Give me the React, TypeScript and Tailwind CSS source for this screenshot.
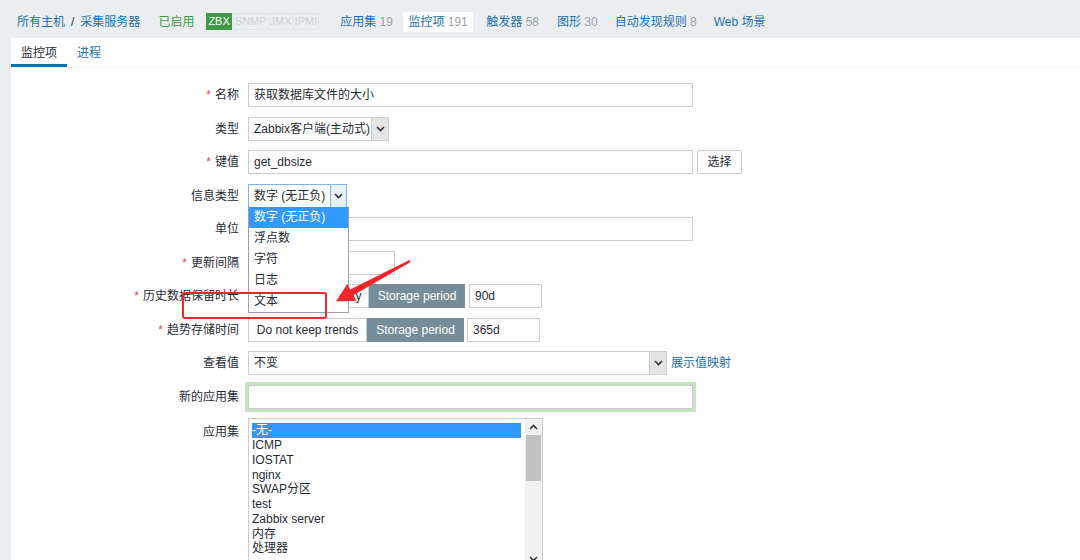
import React from 'react';

const Chevron = ({ up = false }: { up?: boolean }) => (
  <svg width="9" height="6" viewBox="0 0 9 6" className={up ? 'rotate-180' : ''}>
    <path d="M1 1 L4.5 4.5 L8 1" fill="none" stroke="#333" strokeWidth="1.6" />
  </svg>
);

const Req = () => <span className="text-[#d64e4e] mr-1">*</span>;

const Row = ({ label, req, children, top }: { label: string; req?: boolean; children?: React.ReactNode; top?: boolean }) => (
  <div className={`flex ${top ? 'items-start' : 'items-center'}`}>
    <div className={`w-[237px] pr-[9px] text-right text-[#1f2c33] shrink-0 whitespace-nowrap ${top ? 'pt-[5px]' : ''}`}>
      {req && <Req />}
      {label}
    </div>
    <div className="flex items-center">{children}</div>
  </div>
);

const appSets = ['ICMP', 'IOSTAT', 'nginx', 'SWAP分区', 'test', 'Zabbix server', '内存', '处理器'];
const infoTypes = ['数字 (无正负)', '浮点数', '字符', '日志', '文本'];

export default function App() {
  return (
    <div className="relative w-[1080px] h-[560px] overflow-hidden bg-[#ebeef0] text-[12px] font-['Liberation_Sans','Noto_Sans_CJK_SC',sans-serif]">
      {/* 顶部导航 */}
      <header className="h-[38px] flex items-center pt-[5px] pl-[17px] text-[#1e6fb0] whitespace-nowrap">
        <span>所有主机</span>
        <span className="mx-[6px] text-[#333]">/</span>
        <span>采集服务器</span>
        <span className="ml-[18px] text-[#3f9a47]">已启用</span>
        <div className="ml-[12px] flex items-center h-[17px] text-[11px]">
          <span className="h-full px-[2px] flex items-center bg-[#3f9a47] text-white">ZBX</span>
          <div className="ml-[1px] h-full flex items-center border border-[#dfe3e6] text-[#cdd3d7]">
            <span className="px-[1px]">SNMP</span>
            <span className="px-[1px] border-l border-[#dfe3e6]">JMX</span>
            <span className="px-[1px] border-l border-[#dfe3e6]">IPMI</span>
          </div>
        </div>
        <span className="ml-[21px]">应用集 <span className="text-[#9aa3a8]">19</span></span>
        <span className="ml-[10px] bg-white px-[5.5px] h-[20px] flex items-center">监控项&nbsp;<span className="text-[#9aa3a8]">191</span></span>
        <span className="ml-[13px]">触发器 <span className="text-[#9aa3a8]">58</span></span>
        <span className="ml-[18px]">图形 <span className="text-[#9aa3a8]">30</span></span>
        <span className="ml-[17px]">自动发现规则 <span className="text-[#9aa3a8]">8</span></span>
        <span className="ml-[17px]">Web 场景</span>
      </header>

      <div className="ml-[11px] bg-white h-[522px]">
        {/* 标签页 */}
        <div className="flex h-[30px] border-b border-[#f2f2f2]">
          <div className="px-[10px] pt-[4px] flex items-center border-b-[3px] border-[#0275b8] text-[#1f2c33]">监控项</div>
          <div className="px-[10px] pt-[1px] flex items-center text-[#1e6fb0]">进程</div>
        </div>

        <div className="pt-[15px] flex flex-col gap-[9.5px]">
          <Row label="名称" req>
            <div className="w-[445px] h-6 border border-[#cccccc] px-[5px] flex items-center text-[#1f2c33]">获取数据库文件的大小</div>
          </Row>
          <Row label="类型">
            <div className="h-6 flex border border-[#cccccc]">
              <div className="w-[122px] px-[5px] flex items-center text-[#1f2c33] whitespace-nowrap">Zabbix客户端(主动式)</div>
              <div className="w-[17px] border-l border-[#cccccc] bg-[#e5e5e5] flex items-center justify-center"><Chevron /></div>
            </div>
          </Row>
          <Row label="键值" req>
            <div className="w-[445px] h-6 border border-[#cccccc] px-[5px] flex items-center text-[#1f2c33]">get_dbsize</div>
            <button className="ml-[4px] w-[45px] h-6 border border-[#cccccc] rounded-[2px] bg-white text-[#1f2c33]">选择</button>
          </Row>
          <Row label="信息类型">
            <div className="relative">
              <div className="w-[99px] h-6 flex border border-[#7eb4ea]">
                <div className="flex-1 px-[5px] flex items-center text-[#1f2c33] whitespace-nowrap">数字 (无正负)</div>
                <div className="w-[18px] border-l border-[#7eb4ea] bg-[#e5f1fb] flex items-center justify-center"><Chevron /></div>
              </div>
              <div className="absolute left-0 top-[23px] z-10 w-[101px] bg-white border border-[#a0a0a0] border-t-0">
                {infoTypes.map((t, i) => (
                  <div key={t} className={`h-[21px] px-[5px] flex items-center whitespace-nowrap ${i === 0 ? 'bg-[#3399ff] text-white' : 'text-[#1f2c33]'}`}>{t}</div>
                ))}
              </div>
            </div>
          </Row>
          <Row label="单位">
            <div className="w-[445px] h-6 border border-[#cccccc]" />
          </Row>
          <Row label="更新间隔" req>
            <div className="w-[147px] h-6 border border-[#cccccc]" />
          </Row>
          <Row label="历史数据保留时长" req>
            <div className="h-6 flex">
              <div className="w-[121px] border border-[#cccccc] flex items-center px-[9px] text-[#1f2c33] whitespace-nowrap overflow-hidden">Do not keep history</div>
              <div className="w-[96px] bg-[#768d99] text-white flex items-center justify-center">Storage period</div>
              <div className="ml-[4px] w-[73px] border border-[#cccccc] px-[5px] flex items-center text-[#1f2c33]">90d</div>
            </div>
          </Row>
          <Row label="趋势存储时间" req>
            <div className="h-6 flex">
              <div className="w-[119px] border border-[#cccccc] flex items-center justify-center text-[#1f2c33] whitespace-nowrap">Do not keep trends</div>
              <div className="w-[97px] bg-[#768d99] text-white flex items-center justify-center">Storage period</div>
              <div className="ml-[3px] w-[73px] border border-[#cccccc] px-[5px] flex items-center text-[#1f2c33]">365d</div>
            </div>
          </Row>
          <Row label="查看值">
            <div className="w-[419px] h-6 flex border border-[#cccccc]">
              <div className="flex-1 px-[5px] flex items-center text-[#1f2c33]">不变</div>
              <div className="w-[17px] border-l border-[#cccccc] bg-[#e5e5e5] flex items-center justify-center"><Chevron /></div>
            </div>
            <span className="ml-[4px] text-[#1e6fb0]">展示值映射</span>
          </Row>
          <Row label="新的应用集">
            <div className="w-[445px] h-6 border border-[#cccccc] ring-[3px] ring-[#c9e2c6]" />
          </Row>
          <Row label="应用集" top>
            <div className="w-[295px] h-[150px] border border-[#cccccc] flex">
              <div className="flex-1 pl-[3px] pr-[4px] pt-[4px] text-[#1f2c33]">
                <div className="h-[15px] leading-[15px] bg-[#3399ff] text-white">-无-</div>
                {appSets.map(a => <div key={a} className="h-[14.75px] leading-[14.75px] whitespace-nowrap">{a}</div>)}
              </div>
              <div className="w-[17px] bg-[#f0f0f0] flex flex-col items-center">
                <div className="h-[16px] flex items-center"><Chevron up /></div>
                <div className="w-[15px] h-[46px] bg-[#c1c1c1]" />
                <div className="flex-1" />
                <div className="h-[16px] flex items-center"><Chevron /></div>
              </div>
            </div>
          </Row>
        </div>
      </div>

      {/* 标注：红框与箭头 */}
      <div className="absolute left-[182px] top-[292px] w-[145px] h-[27px] border-2 border-[#f2262b] rounded-[3px] z-20" />
      <svg className="absolute left-[330px] top-[255px] z-20" width="90" height="50" viewBox="330 255 90 50">
        <polygon
          points="409.4,260 410.6,262 353.4,295.2 356.6,300.8 336,301.5 347.2,284 350.2,289.6"
          fill="#f2262b"
        />
      </svg>
    </div>
  );
}
